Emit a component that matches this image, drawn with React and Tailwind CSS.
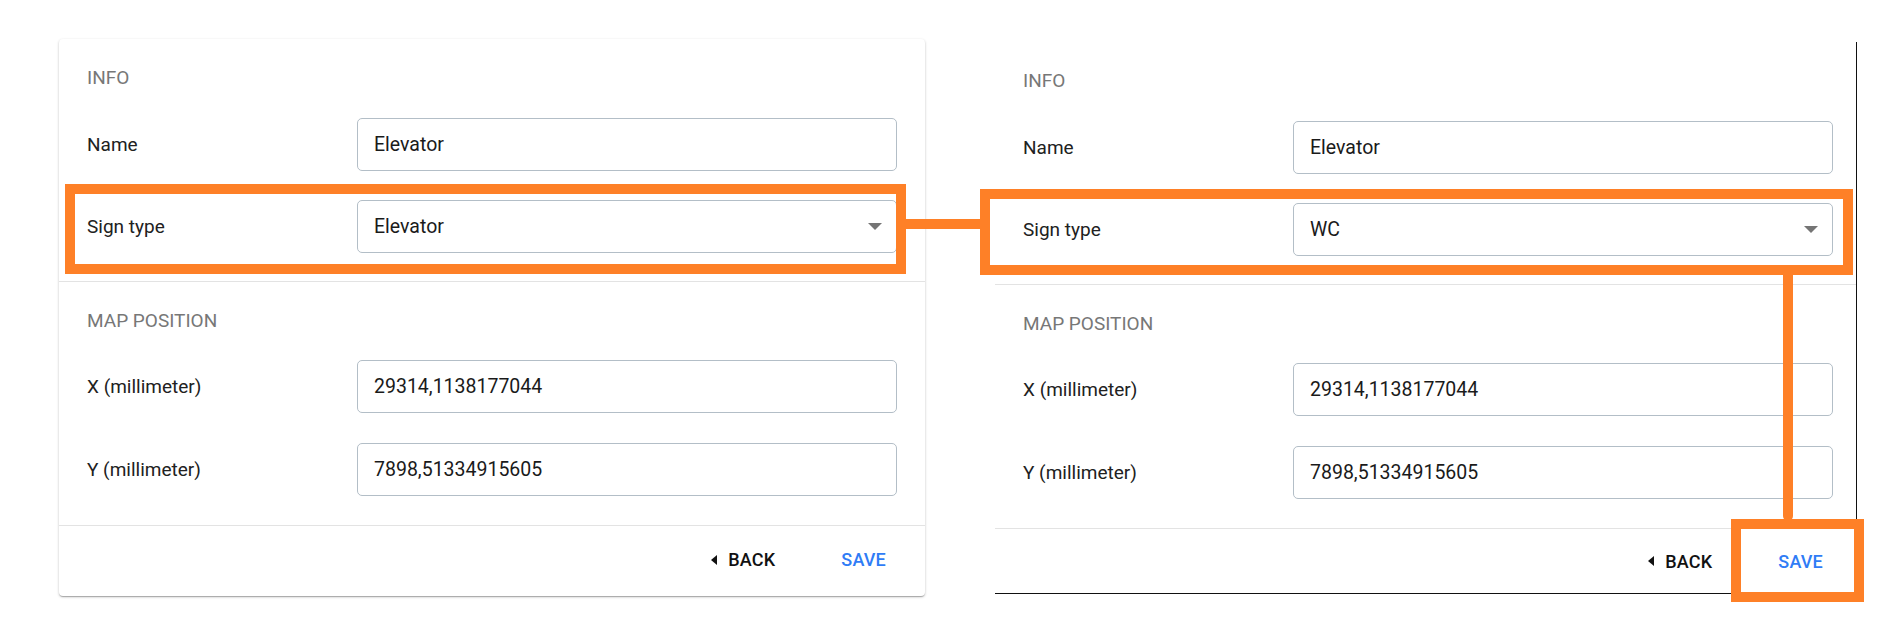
import React from "react";

const font = { fontFamily: "Roboto, 'Liberation Sans', sans-serif" };

function Field({ label, value, select }) {
  return (
    <div className="flex items-center">
      <div className="w-[270px] shrink-0 text-[19px] leading-[22px] text-[#212121]">{label}</div>
      <div className="flex-1 h-[53px] flex items-center justify-between pl-4 pr-[14px] border border-[#b3bec7] rounded-[5px] bg-white">
        <span className="text-[19.5px] leading-[22px] text-[#1a1a1a]">{value}</span>
        {select && (
          <svg width="14" height="7" viewBox="0 0 14 7">
            <polygon points="0,0 14,0 7,7" fill="#757575" />
          </svg>
        )}
      </div>
    </div>
  );
}

function Form({ sign, cropped }) {
  return (
    <>
      <div className={cropped ? "pl-7 pr-[23px] pt-[28px] pb-[28px] border-b border-[#e3e3e3]" : "px-7 pt-[28px] pb-[28px] border-b border-[#e3e3e3]"}>
        <div className="h-[22px] leading-[22px] text-[19px] text-[#777777]">INFO</div>
        <div className="mt-[29px] flex flex-col gap-[29px]">
          <Field label="Name" value="Elevator" />
          <Field label="Sign type" value={sign} select />
        </div>
      </div>
      <div className={cropped ? "pl-7 pr-[23px] pt-[28px] pb-[29px] border-b border-[#e3e3e3]" : "px-7 pt-[28px] pb-[29px] border-b border-[#e3e3e3]"}>
        <div className="h-[22px] leading-[22px] text-[19px] text-[#777777]">MAP POSITION</div>
        <div className="mt-[28px] flex flex-col gap-[30px]">
          <Field label="X (millimeter)" value="29314,1138177044" />
          <Field label="Y (millimeter)" value="7898,51334915605" />
        </div>
      </div>
      <div className={cropped ? "h-[64px] flex items-center justify-end pr-[33px]" : "h-[70px] pb-[3px] flex items-center justify-end pr-[39px]"}>
        <div className="flex items-center">
          <svg width="6" height="10" viewBox="0 0 6 10" className="mr-[11px]">
            <polygon points="6,0 6,10 0,5" fill="#111" />
          </svg>
          <span className="text-[18px] font-medium tracking-[0.2px] text-[#111]">BACK</span>
        </div>
        <span className="ml-[66px] text-[18px] font-medium tracking-[0.2px] text-[#2f7cf6]">SAVE</span>
      </div>
    </>
  );
}

export default function App() {
  return (
    <div className="relative w-[1903px] h-[619px] bg-white overflow-hidden" style={font}>
      <div className="flex items-start pl-[59px] pt-[39px]">
        <div className="w-[866px] bg-white rounded-[4px] shadow-[0_1px_3px_rgba(0,0,0,0.2),0_1px_1px_rgba(0,0,0,0.14),0_2px_1px_-1px_rgba(0,0,0,0.12)]">
          <Form sign="Elevator" />
        </div>
        <div className="ml-[70px] mt-[3px] w-[862px] bg-white border-r border-b border-[#111]">
          <Form sign="WC" cropped />
        </div>
      </div>

      {/* annotations */}
      <div className="absolute left-[65px] top-[184px] w-[841px] h-[90px] border-[10px] border-[#fe8027]" />
      <div className="absolute left-[906px] top-[219px] w-[74px] h-[10px] bg-[#fe8027]" />
      <div className="absolute left-[980px] top-[189px] w-[873px] h-[86px] border-[10px] border-[#fe8027]" />
      <div className="absolute left-[1783px] top-[275px] w-[10px] h-[246px] bg-[#fe8027] rounded-b-full" />
      <div className="absolute left-[1731px] top-[519px] w-[133px] h-[83px] border-[10px] border-[#fe8027]" />
    </div>
  );
}
